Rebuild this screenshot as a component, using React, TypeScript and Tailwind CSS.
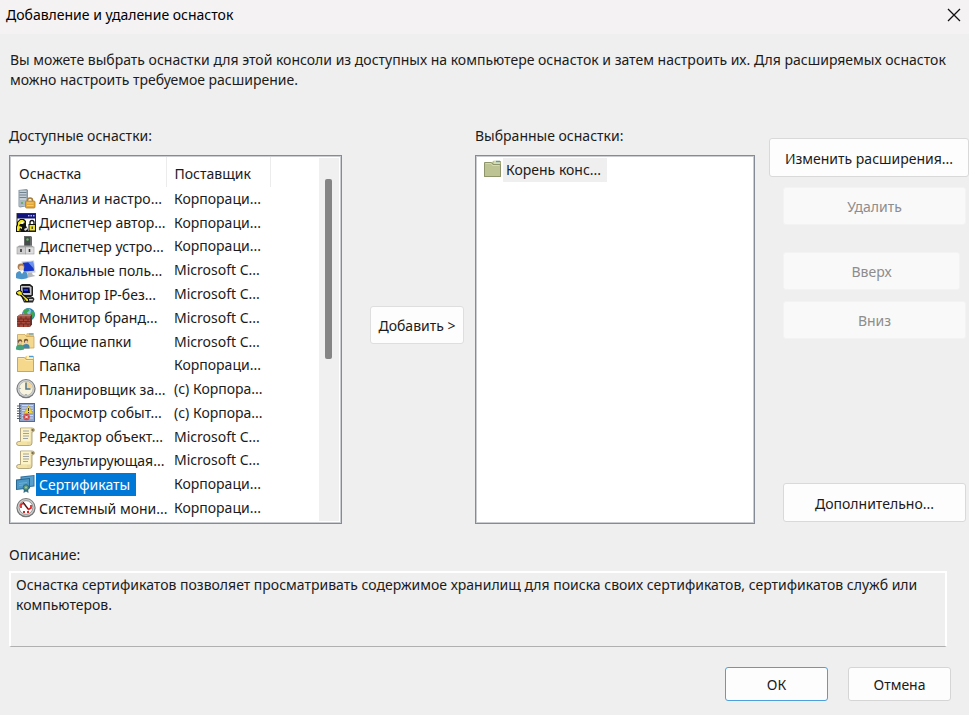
import { useState, type ReactNode } from "react";

function Icon({ children }: { children: ReactNode }) {
  return (
    <svg className="size-5 shrink-0" viewBox="0 0 20 20" aria-hidden="true">
      {children}
    </svg>
  );
}

function SecurityIcon() {
  return (
    <Icon>
      <path d="M2.500 1l8-1 1.500 1v16l-8 1.500-1.500-1z" fill="#8796a3" />
      <path d="M3.500 1.500h7v15l-7 1z" fill="#c3ced6" />
      <path d="M3.500 3.500h7M3.500 6h7M3.500 8.500h7" stroke="#71818e" strokeWidth="1" />
      <path d="M3.500 11h7v5l-7 1z" fill="#aab8c2" />
      <circle cx="6" cy="14" r="1" fill="#58a84b" />
      <path d="M11.500 12.500v-1a2.500 2.500 0 0 1 5 0v1" fill="none" stroke="#a87c38" strokeWidth="1.600" />
      <rect x="9.500" y="12" width="9.500" height="7" rx="1" fill="#e2a83a" stroke="#b07c20" strokeWidth=".8" />
      <path d="M11 14h6.500M11 16.500h6.500" stroke="#f5cf78" strokeWidth=".9" />
    </Icon>
  );
}

function AuthorizationIcon() {
  return (
    <Icon>
      <rect x="1" y=".5" width="18.500" height="18" fill="#fff" stroke="#333" />
      <path d="M1 1h18.500v4.500H1z" fill="#10147c" />
      <path d="M12 2.800h1.500M14.500 2.800H16M17 2.800h1.500" stroke="#fff" />
      <path d="M1 9l3-3h4l2 2v5l2 3v2l-3 1H5l-1-2-1 2H0v-6l1-1z" fill="#111" />
      <path d="M2 9.500L4.500 7H7l2 2-2 2H4l-1 2 3 1v2l-2-1-1 3H1v-4l1-2z" fill="#f4e721" />
      <path d="M5 9h2v1.500H5z" fill="#fff" />
      <path d="M8 16l3-1.500 1 1.500-3 2z" fill="#ddd" />
      <path d="M14 12V9.500a2 2 0 0 1 4 0V12" fill="none" stroke="#111" strokeWidth="1.300" />
      <rect x="13" y="11.500" width="6.500" height="6.500" fill="#efe22a" stroke="#111" />
      <path d="M16.200 13.500v2.500" stroke="#111" />
    </Icon>
  );
}

function DeviceIcon() {
  return (
    <Icon>
      <path d="M8 0h7l1 1v10H8z" fill="#686b6b" />
      <path d="M9 1h5v9H9z" fill="#474b4b" />
      <circle cx="11.500" cy="3.500" r="1.200" fill="#4bc94f" />
      <path d="M3 9.500h13l1.500 1.500h-16z" fill="#a5a6a6" />
      <rect x="1" y="11" width="8.500" height="7" fill="#cfcfcf" stroke="#999" strokeWidth=".6" />
      <rect x="9.500" y="11" width="8.500" height="7" fill="#dedede" stroke="#999" strokeWidth=".6" />
      <path d="M5 13v3M13.500 13v3" stroke="#333" strokeWidth="1.600" />
    </Icon>
  );
}

function UsersIcon() {
  return (
    <Icon>
      <path d="M5.500 1.500L18 .5l1.500 12-12 1z" fill="#c8cdd3" />
      <path d="M6.800 2.800L17 1.800l1 9-10 .8z" fill="#1634c8" />
      <path d="M12 2.300l5-.5.900 7z" fill="#6d93ef" />
      <path d="M12 13l4-.5.500 2 3 1.500-9 2z" fill="#b1b7bd" />
      <circle cx="5" cy="6.800" r="3.400" fill="#a97b4f" />
      <circle cx="5.500" cy="8" r="2.400" fill="#efcda3" />
      <path d="M0 18v-3c0-3 2-4 5.500-4s6 1 6 4v3c-3 1.500-8.500 1.500-11.500 0z" fill="#4d94c8" />
      <path d="M4 11l2 3 2-3z" fill="#fff" />
    </Icon>
  );
}

function IpMonitorIcon() {
  return (
    <Icon>
      <path d="M4 1.500L6 0h8l3 2.500v9l-2 1.500H6l-2-2z" fill="#202020" />
      <path d="M5 2h9l1.500 1.500V11H6L5 9.500z" fill="#c4c4c4" />
      <path d="M6.500 3.500h7l.5 5.500H7z" fill="#050840" />
      <path d="M7.500 5h4.500v2H8z" fill="#2638cf" />
      <path d="M6 14l11-1 1.500 2-1.500 3.500H8z" fill="#292929" />
      <path d="M8 15h9l-.5 1.500H8z" fill="#d1d1d1" />
      <path d="M0 8l3-2 3 1 1 3 6 5v3h-3l-1-2-2-1-3-3.500H2L0 10z" fill="#111" />
      <path d="M.5 8.500l3-1.500 2 1 .5 2.500 6 5V17h-1.500L9 15l-3.500-4-3-.5z" fill="#f5ea18" />
    </Icon>
  );
}

function FirewallIcon() {
  return (
    <Icon>
      <circle cx="12.500" cy="6.500" r="6.500" fill="#2879c4" />
      <circle cx="11.500" cy="5" r="4.500" fill="#7cc4f0" />
      <path d="M8 2l4-2 1.500 2.500-2.500 2 1 2-3 1-2-3zM15 3l2.500-.5L19 7l-3 4-2-4z" fill="#3ba653" />
      <path d="M1 8.500L4 6.500h12v10L14 19H1z" fill="#6d3028" />
      <path d="M1 8.500h13V19H1z" fill="#a84b3d" />
      <path d="M1 8.500l3-2h12l-2 2z" fill="#c07765" />
      <path d="M1 11h13M1 13.500h13M1 16h13M5 8.500V11M10 8.500V11M3 11v2.500M7.500 11v2.500M12 11v2.500M5 13.500V16M10 13.500V16M3 16v3M7.500 16v3M12 16v3" stroke="#642721" strokeWidth=".8" />
    </Icon>
  );
}

function FolderIcon({ green = false }: { green?: boolean }) {
  return (
    <Icon>
      <path d="M1 3h8l1-2h8v16H1z" fill={green ? "#a7ad77" : "#e0b65c"} />
      <path d="M10.500 .5h6.500V4h-6.500z" fill={green ? "#d4dbae" : "#fff0b7"} />
      <path d="M13 1.500h4" stroke="#4d9bd3" strokeWidth="1.300" />
      <path d="M1.500 2.500h7l1.500 2h7.500v12h-16z" fill={green ? "#bec394" : "#f6d88c"} stroke={green ? "#8e956a" : "#d1a54f"} />
      <path d="M2.500 3.500H8l1.500 2h7" fill="none" stroke={green ? "#d4d9b0" : "#fbe6ac"} />
    </Icon>
  );
}

function SharedFolderIcon() {
  return (
    <Icon>
      <path d="M1 3h9l1-2h7v15l-17 1z" fill="#e9c574" />
      <path d="M1.500 2.500H9l1.500 2H18V16H1.500z" fill="#f4d88d" stroke="#c79f50" strokeWidth=".7" />
      <path d="M13 2h4" stroke="#4a9ad2" />
      <circle cx="4" cy="9.500" r="2.200" fill="#73563e" />
      <circle cx="10" cy="9" r="2.200" fill="#73563e" />
      <circle cx="4.300" cy="10.500" r="1.500" fill="#f0cba3" />
      <circle cx="10.300" cy="10" r="1.500" fill="#f0cba3" />
      <path d="M6.500 16.500V15q0-3 4-3 3 0 3 3v1.500z" fill="#4384a9" />
      <path d="M0 17.500V16q0-3.500 4-3.500T8 16v1.500q-4 1.500-8 0z" fill="#45a27d" />
    </Icon>
  );
}

function ClockIcon() {
  return (
    <Icon>
      <circle cx="10" cy="9.700" r="9.600" fill="#77797b" />
      <circle cx="10" cy="9.500" r="8.500" fill="#d0d3d4" />
      <circle cx="10" cy="9.500" r="7" fill="#f7f3dd" stroke="#a2a5a6" strokeWidth=".6" />
      <path d="M10 9.500V3a6.500 6.500 0 0 1 6.500 6.500z" fill="#f5d59a" />
      <path d="M10 3.500V10h4.500" fill="none" stroke="#4a7590" strokeWidth="1.500" />
      <path d="M3.500 9.500h1M10 15v1" stroke="#687a82" />
    </Icon>
  );
}

function EventIcon() {
  return (
    <Icon>
      <rect x="3.500" y=".5" width="15" height="18" fill="#92a5cc" stroke="#53699a" />
      <path d="M6 2.500h11M6 5h11M6 7.500h11M6 10h11M6 12.500h11M6 15h11" stroke="#cddaf0" />
      <path d="M1 3h4M1 5.500h4M1 8h4M1 10.500h4M1 13h4M1 15.500h4" stroke="#525d6a" />
      <path d="M12.500 2.500l4.500 8H8z" fill="#f1d635" stroke="#b39619" strokeWidth=".5" />
      <path d="M12.500 5v3M12.500 9v1" stroke="#40371a" />
      <circle cx="10.500" cy="14" r="3.300" fill="#cf4848" />
      <path d="M9.200 12.700l2.600 2.600m0-2.600l-2.600 2.600" stroke="#fff" strokeWidth="1" />
    </Icon>
  );
}

function ScrollIcon() {
  return (
    <Icon>
      <path d="M4.500 1H16q2.500 0 2.500 2T16 5v11q0 2.500-2.500 2.500H3q-2.500 0-2.500-2T3 14.500h1.500z" fill="#eadba2" stroke="#a4946a" strokeWidth=".8" />
      <path d="M5 1.500h10q-1 1-.5 3v10H5z" fill="#fdf3c9" />
      <path d="M2.500 15H11q-1 2 1 3H3q-2-1-.5-3z" fill="#f4e2a3" />
      <path d="M7 4h6M7 6.500h6M7 9h6M7 11.500h5" stroke="#9299a0" strokeWidth=".9" />
      <path d="M15.500 2q2.500-.5 2.500 1t-2.500 1z" fill="#7b7050" />
    </Icon>
  );
}

function CertificateIcon() {
  return (
    <Icon>
      <path d="M4.500 2.500L18.500 1v11.500L4.500 14z" fill="#2f719d" />
      <path d="M5.500 3.500L17.500 2v9.500L5.500 13z" fill="#579fcd" />
      <path d="M0 5.500L14 4v10.500L0 16z" fill="#286792" />
      <path d="M1 6.500L13 5v8.500L1 15z" fill="#4c97c5" />
      <path d="M3 9.500l8-1M3 11.500l4-.5" stroke="#68b1da" />
      <path d="M8 14l-.5 5 2.500-1.500 2.500 1.500-.5-5z" fill="#2c6f8d" />
      <circle cx="10" cy="13.500" r="2.800" fill="#5f9a80" stroke="#2d6c7c" />
      <circle cx="10" cy="13.500" r="1" fill="#b9ca8f" />
    </Icon>
  );
}

function PerformanceIcon() {
  return (
    <Icon>
      <circle cx="10" cy="9.700" r="9.600" fill="#757575" />
      <circle cx="10" cy="9.500" r="8.500" fill="#cdcdcd" />
      <circle cx="10" cy="9.500" r="6.800" fill="#fff" stroke="#777" strokeWidth=".7" />
      <path d="M5 10V6.500L7.500 5l5 6.500 2.500-1.500V7" fill="none" stroke="#db2323" strokeWidth="1.700" />
      <path d="M7 4l5 7" stroke="#222" />
      <path d="M7 14h2m2 0h2" stroke="#cc2727" strokeWidth="1.800" />
    </Icon>
  );
}

const snapIns = [
  { name: "Анализ и настро...", vendor: "Корпораци...", icon: <SecurityIcon /> },
  { name: "Диспетчер автор...", vendor: "Корпораци...", icon: <AuthorizationIcon /> },
  { name: "Диспетчер устро...", vendor: "Корпораци...", icon: <DeviceIcon /> },
  { name: "Локальные поль...", vendor: "Microsoft C...", icon: <UsersIcon /> },
  { name: "Монитор IP-без...", vendor: "Microsoft C...", icon: <IpMonitorIcon /> },
  { name: "Монитор бранд...", vendor: "Microsoft C...", icon: <FirewallIcon /> },
  { name: "Общие папки", vendor: "Microsoft C...", icon: <SharedFolderIcon /> },
  { name: "Папка", vendor: "Корпораци...", icon: <FolderIcon /> },
  { name: "Планировщик за...", vendor: "(с) Корпора...", icon: <ClockIcon /> },
  { name: "Просмотр событ...", vendor: "(с) Корпора...", icon: <EventIcon /> },
  { name: "Редактор объект...", vendor: "Microsoft C...", icon: <ScrollIcon /> },
  { name: "Результирующая...", vendor: "Microsoft C...", icon: <ScrollIcon /> },
  { name: "Сертификаты", vendor: "Корпораци...", icon: <CertificateIcon /> },
  { name: "Системный мони...", vendor: "Корпораци...", icon: <PerformanceIcon /> },
];

const buttonBase = "rounded-[3px] border bg-[#fdfdfd] pt-[2px] text-center whitespace-nowrap";
const disabledButton = "ml-[14px] h-[38px] rounded-[3px] border border-[#f3f3f3] bg-[#f9f9f9] pt-[2px] text-[#8d8d8d]";
const listBox = "h-[369px] border border-[#858b94] bg-white shadow-[inset_0_0_0_1px_#c9ccd0]";

export default function App() {
  const [selected, setSelected] = useState(12);

  return (
    <div className="min-h-screen bg-[#efefef] font-['Noto_Sans','Open_Sans',sans-serif] text-[14px] leading-5 text-[#1b1b1b]">
      <header className="flex h-[34px] items-center justify-between bg-[#f4f2f2] pr-2 pl-[6px] text-black">
        <h1 className="pb-1">Добавление и удаление оснасток</h1>
        <button type="button" aria-label="Закрыть" className="pb-1">
          <svg className="size-[14px]" viewBox="0 0 14 14" aria-hidden="true">
            <path d="M1 1l12 12M13 1L1 13" stroke="#111" strokeWidth="1.300" />
          </svg>
        </button>
      </header>

      <main>
        <p className="px-[10px] pt-4">
          Вы можете выбрать оснастки для этой консоли из доступных на компьютере оснасток и затем настроить их. Для расширяемых оснасток можно настроить требуемое расширение.
        </p>

        <div className="mt-9 flex pl-[9px]">
          <section className="min-w-0 flex-[333]">
            <h2 id="available" className="h-[29px]">Доступные оснастки:</h2>
            <div className={`${listBox} flex p-px`}>
              <div className="min-w-0 flex-1 pb-[2px]">
                <table aria-labelledby="available" className="h-full w-full table-fixed border-collapse text-left whitespace-nowrap">
                  <thead>
                    <tr className="h-[30px]">
                      <th scope="col" className="w-[155px] border-r border-[#ececec] p-0 pt-1 pl-2 font-normal">Оснастка</th>
                      <th scope="col" className="w-[104px] border-r border-[#ececec] p-0 pt-1 pl-2 font-normal">Поставщик</th>
                      <th aria-hidden="true" className="p-0" />
                    </tr>
                  </thead>
                  <tbody>
                    {snapIns.map((item, index) => (
                      <tr key={item.name} aria-selected={index === selected} onClick={() => setSelected(index)}>
                        <td className="p-0 pl-[5px]">
                          <div className="flex items-center">
                            {item.icon}
                            <span className={`h-[23px] pr-[6px] pl-[3px] leading-[23px] ${index === selected ? "bg-[#0078d7] text-white" : ""}`}>{item.name}</span>
                          </div>
                        </td>
                        <td className="p-0 pl-2">{item.vendor}</td>
                        <td className="p-0" />
                      </tr>
                    ))}
                  </tbody>
                </table>
              </div>
              <div className="my-px mr-px w-5 bg-[#f0f0f0] px-[6px] pt-[21px]">
                <div className="h-[180px] w-[7px] rounded-[2px] bg-[#858585]" />
              </div>
            </div>
          </section>

          <button type="button" className={`${buttonBase} mr-[11px] ml-7 mt-[180px] h-[38px] w-[94px] border-[#dedede]`}>
            Добавить &gt;
          </button>

          <section className="min-w-0 flex-[280]">
            <h2 className="h-[29px]">Выбранные оснастки:</h2>
            <div className={`${listBox} pt-[2px] pl-[7px]`}>
              <div className="flex items-center">
                <FolderIcon green />
                <span className="bg-[#efefef] py-[2px] pr-[6px] pl-[3px]">Корень конс...</span>
              </div>
            </div>
          </section>

          <div className="ml-[14px] flex w-[200px] flex-col pt-3">
            <button type="button" className={`${buttonBase} h-[39px] border-[#d9d9d9]`}>Изменить расширения...</button>
            <button type="button" disabled className={`${disabledButton} mt-[10px] mr-[3px]`}>Удалить</button>
            <button type="button" disabled className={`${disabledButton} mt-[27px] mr-[9px]`}>Вверх</button>
            <button type="button" disabled className={`${disabledButton} mt-[11px] mr-[3px]`}>Вниз</button>
            <button type="button" className={`${buttonBase} mt-auto mr-[3px] mb-[2px] ml-[14px] h-[39px] border-[#d9d9d9]`}>Дополнительно...</button>
          </div>
        </div>

        <div className="mt-[21px] pr-[22px] pl-[9px]">
          <label htmlFor="description" className="block h-[26px]">Описание:</label>
          <textarea
            id="description"
            readOnly
            className="block h-[76px] w-full resize-none border-2 border-b border-white border-b-[#b0b0b0] bg-transparent px-[5px] py-[2px] outline-none"
            value="Оснастка сертификатов позволяет просматривать содержимое хранилищ для поиска своих сертификатов, сертификатов служб или компьютеров."
          />
        </div>

        <footer className="mt-5 flex justify-end gap-5 pr-[18px]">
          <button type="button" className={`${buttonBase} h-[34px] w-[103px] border-[#4f9fdc]`}>ОК</button>
          <button type="button" className={`${buttonBase} h-[34px] w-[103px] border-[#d5d5d5]`}>Отмена</button>
        </footer>
      </main>
    </div>
  );
}
